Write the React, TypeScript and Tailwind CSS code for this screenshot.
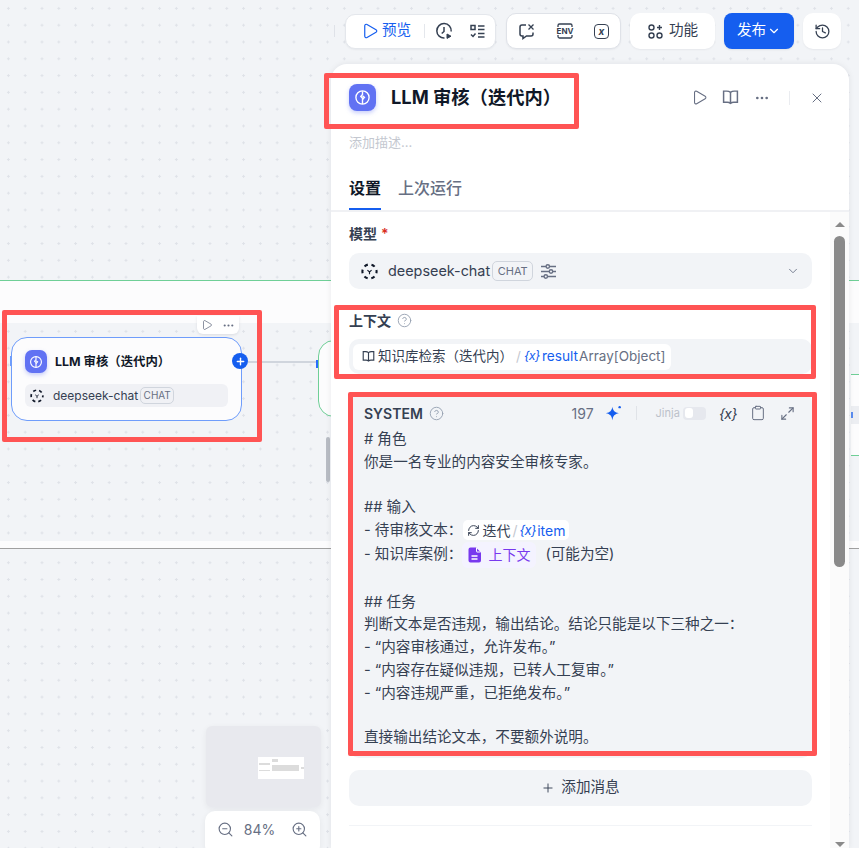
import {
  ChevronDown,
  CircleHelp,
  Clipboard,
  Ellipsis,
  History,
  Maximize2,
  Play,
  Plus,
  RefreshCw,
  X,
  ZoomIn,
  ZoomOut,
} from 'lucide-react';

const FONT = 'font-["Inter","Noto_Sans_CJK_SC",sans-serif]';

const VarIcon = ({ className = '' }: { className?: string }) => (
  <span className={`italic tracking-[-0.5px] ${className}`}>{'{x}'}</span>
);

// llm node logo
const BrainIcon = ({ size = 16 }: { size?: number }) => (
  <svg width={size} height={size} viewBox="0 0 16 16" fill="none" stroke="white" strokeWidth="1.3">
    <circle cx="8" cy="8" r="6.2" />
    <path d="M8 2v3.2L6.4 7 8 8.6V14" />
    <path d="M8 6.5l1.8 1.3L8 10" />
  </svg>
);

const LlmBadge = ({ box, icon }: { box: string; icon: number }) => (
  <div className={`${box} flex shrink-0 items-center justify-center bg-[#6172f3] shadow-[0_2px_4px_rgba(97,114,243,0.35)]`}>
    <BrainIcon size={icon} />
  </div>
);

const DeepseekIcon = ({ size = 18 }: { size?: number }) => (
  <svg width={size} height={size} viewBox="0 0 18 18" fill="none" stroke="#101828" strokeWidth="2.2">
    <circle cx="9" cy="9" r="7.500" strokeDasharray="3.900 3.950" strokeDashoffset="2" />
    <path d="M6.800 7.500L9 9.400l2.200-1.900M9 9.400v2.400" strokeWidth="1.200" />
  </svg>
);

const ChatTag = ({ className = '' }: { className?: string }) => (
  <span className={`flex items-center justify-center rounded-[5px] border border-[#d0d5dd] text-[#676f83] ${className}`}>
    CHAT
  </span>
);

const BookIcon = ({ size = 16, stroke = '#676f83' }: { size?: number; stroke?: string }) => (
  <svg width={size} height={size} viewBox="0 0 16 16" fill="none" stroke={stroke} strokeWidth="1.4">
    <path d="M8 3.200C7 2.400 5.800 2 4.500 2H1.500v10.500h3.500c1.200 0 2.200.3 3 1 .8-.7 1.800-1 3-1h3.500V2h-3c-1.300 0-2.500.4-3.500 1.200zM8 3.200v10.300" />
  </svg>
);

const ClockPlayIcon = () => (
  <svg width="18" height="18" viewBox="0 0 18 18" fill="none" stroke="#354052" strokeWidth="1.500">
    <path d="M9.500 16A7.200 7.200 0 1 1 16.200 9.500" />
    <path d="M9 5v4.500l-2.300 2" />
    <path d="M12 12l4 2.200-4 2.200z" fill="#354052" strokeLinejoin="round" strokeWidth="1" />
  </svg>
);

const ChecklistIcon = () => (
  <svg width="17" height="17" viewBox="0 0 17 17" fill="none" stroke="#354052" strokeWidth="1.500">
    <rect x="2" y="2.500" width="4" height="4" />
    <path d="M9 3h6.500M9 6.500h6.500M9 10.500h6.500M9 14h6.500" />
    <path d="M2 11.500l2 2 2.500-3" />
  </svg>
);

const ChatVarIcon = () => (
  <svg width="18" height="18" viewBox="0 0 18 18" fill="none" stroke="#354052" strokeWidth="1.500">
    <path d="M8 3H4a2 2 0 0 0-2 2v7a2 2 0 0 0 2 2h1v2.500L8.500 14H13a2 2 0 0 0 2-2v-1.500" />
    <path d="M10.500 2.500l5 5M15.500 2.500l-5 5" strokeWidth="1.300" />
  </svg>
);

const EnvIcon = () => (
  <div className="relative flex h-[18px] w-[18px] items-center justify-center">
    <svg className="absolute inset-0" width="18" height="18" viewBox="0 0 18 18" fill="none" stroke="#354052" strokeWidth="1.300">
      <path d="M2 5V3.500A1.500 1.500 0 0 1 3.500 2h11A1.500 1.500 0 0 1 16 3.500V5M2 13v1.500A1.500 1.500 0 0 0 3.500 16h11a1.500 1.500 0 0 0 1.500-1.500V13" />
    </svg>
    <span className="relative text-[8px] leading-none font-bold text-[#354052]">ENV</span>
  </div>
);

const SlidersIcon = () => (
  <svg width="17" height="17" viewBox="0 0 17 17" fill="none" stroke="#676f83" strokeWidth="1.400">
    <path d="M1 3.500h5M9.500 3.500H16M1 8.500h8M13 8.500h3M1 13.500h3M7.500 13.500H16" />
    <circle cx="7.800" cy="3.500" r="1.700" />
    <circle cx="11" cy="8.500" r="1.700" />
    <circle cx="5.800" cy="13.500" r="1.700" />
  </svg>
);

const SparkIcon = () => (
  <svg width="19" height="19" viewBox="0 0 17 17" fill="#155eef">
    <path d="M7.500 2.500c.6 3.600 2 5 5.800 5.800-3.800.8-5.200 2.200-5.800 6.200-.6-4-2-5.400-5.800-6.200 3.800-.8 5.200-2.200 5.800-5.800z" />
    <circle cx="14" cy="2.800" r="1.100" />
  </svg>
);

const DocIcon = () => (
  <svg width="14" height="16" viewBox="0 0 14 16">
    <path d="M2.500 0.500H8L13 5.500V13.500a2 2 0 0 1-2 2H2.500a2 2 0 0 1-2-2V2.500a2 2 0 0 1 2-2z" fill="#7839ee" />
    <path d="M8.500 1v3.500a.5.5 0 0 0 .5.5h3.500" stroke="white" strokeWidth="1" fill="none" />
    <path d="M3.500 9h6M3.500 12h6" stroke="white" strokeWidth="1.300" />
  </svg>
);

const Line = ({ children = null, className = 'h-[23px]' }: { children?: React.ReactNode; className?: string }) => (
  <div className={`flex items-center whitespace-pre ${className}`}>{children}</div>
);

const RedBox = ({ className }: { className: string }) => (
  <div className={`pointer-events-none absolute rounded-[2px] border-[5px] border-[#ff5454] ${className}`} />
);

const Canvas = () => (
  <>
    {/* iteration container */}
    <div className="absolute top-[280px] left-0 h-[269px] w-[859px] border-t border-b border-t-[#6fcf97] border-b-[#a0a0a0] bg-[#fcfcfd] pt-[42px] pb-[7px]">
      <div className="h-full w-full bg-[#f2f4f7] bg-[radial-gradient(#dfe2e8_1px,transparent_1px)] bg-[size:16.8px_16.8px]" />
    </div>

    {/* llm node */}
    <div className="absolute top-[337px] left-[11px] h-[84px] w-[231px] rounded-[16px] border border-[#6f9dfb] bg-[#fcfcfd] px-[13px] pt-[12px]">
      <div className="flex items-center gap-2">
        <LlmBadge box="h-[23px] w-[22px] rounded-[7px]" icon={14} />
        <span className="mt-[2px] text-[12.4px] font-bold text-[#101828]">LLM 审核（迭代内）</span>
      </div>
      <div className="mt-[11px] flex h-[23px] w-[203px] items-center rounded-[6px] bg-[#f0f1f5] pl-[5px]">
        <DeepseekIcon size={14} />
        <span className="ml-[9px] text-[12px] text-[#354052]">deepseek-chat</span>
        <ChatTag className="ml-[2px] h-[17px] w-[34px] text-[10px]" />
      </div>
    </div>
    <div className="absolute top-[316px] left-[197px] flex h-[18px] w-[42px] items-center justify-center gap-[9px] rounded-b-[6px] bg-white shadow-[0_1px_3px_rgba(16,24,40,0.1)]">
      <Play size={12} strokeWidth={1.5} className="text-[#676f83]" />
      <Ellipsis size={13} strokeWidth={2} className="text-[#676f83]" />
    </div>
    <div className="absolute top-[353px] left-[232px] flex h-4 w-4 items-center justify-center rounded-full bg-[#155eef]">
      <Plus size={11} strokeWidth={3} className="text-white" />
    </div>
    <div className="absolute top-[356px] left-[10px] h-[10px] w-[2px] bg-[#6f9dfb]" />
    <div className="absolute top-[361px] left-[248px] h-[2px] w-[69px] bg-[#d0d5dd]" />
    <div className="absolute top-[360px] left-[316px] h-[8px] w-[2px] bg-[#296dff]" />
    <div className="absolute top-[340px] left-[318px] h-[77px] w-[40px] rounded-[16px] border border-[#6fcf97] bg-[#fcfcfd]" />
    <div className="absolute top-[437px] left-[326px] h-[45px] w-[4px] rounded-[2px] bg-[#b8bcc4]" />

    {/* node cut off by the right edge */}
    <div className="absolute top-[374px] left-[851px] flex h-[82px] w-[8px] items-center border-t border-b border-[#6fcf97] bg-[#fcfcfd]">
      <div className="flex h-[18px] w-full items-center bg-[#eceef2]">
        <div className="h-[6px] w-[2px] bg-[#5b8def]" />
      </div>
    </div>

    {/* minimap */}
    <div className="absolute top-[726px] left-[206px] flex h-[81px] w-[115px] items-start rounded-[6px] bg-[#e8e9ee] pt-[31px] pl-[52px] shadow-[0_2px_6px_rgba(16,24,40,0.06)]">
      <div className="flex h-[22px] w-[46px] bg-white">
        <div className="mt-[6px] ml-[1px] flex h-[8px] w-[11px] flex-col justify-between">
          <div className="h-[1.5px] w-full bg-[#dcdcdc]" />
          <div className="h-[1.5px] w-full bg-[#dcdcdc]" />
        </div>
        <div className="ml-[2px] flex flex-col pt-[2px]">
          <div className="h-[3px] w-[6px] bg-[#dcdcdc]" />
          <div className="mt-[3px] h-[6px] w-[27px] bg-[#dcdcdc]" />
        </div>
        <div className="mt-[10px] ml-[2px] h-[1.5px] w-[3px] bg-[#dcdcdc]" />
      </div>
    </div>
    <div className="absolute top-[811px] left-[205px] flex h-[44px] w-[115px] items-center justify-between rounded-[10px] bg-white px-[12px] pb-[8px] text-[#676f83] shadow-[0_2px_6px_rgba(16,24,40,0.06)]">
      <ZoomOut size={17} strokeWidth={1.6} />
      <span className="mr-[6px] text-[14px]">84%</span>
      <ZoomIn size={17} strokeWidth={1.6} />
    </div>
  </>
);

const Toolbar = () => (
  <>
    <div className="absolute top-[25px] left-[334px] h-[12px] w-px bg-[#dfe2e8]" />
    <div className="absolute top-[13px] left-[345px] flex items-center text-[14.6px]">
      <div className="flex h-[35px] w-[151px] items-center rounded-[10px] border border-[#e4e7ec] bg-white pl-[15px] shadow-[0_1px_2px_rgba(16,24,40,0.05)]">
        <Play size={18} strokeWidth={1.6} className="text-[#155eef]" />
        <span className="ml-[3px] text-[#155eef]">预览</span>
        <div className="ml-[13px] h-[14px] w-px bg-[#e4e7ec]" />
        <div className="ml-[10px]">
          <ClockPlayIcon />
        </div>
        <div className="ml-[16px]">
          <ChecklistIcon />
        </div>
      </div>
      <div className="ml-[10px] flex h-[36px] w-[115px] items-center justify-between rounded-[10px] border border-[#dfe2e8] bg-white px-[11px] shadow-[0_1px_2px_rgba(16,24,40,0.05)]">
        <ChatVarIcon />
        <EnvIcon />
        <div className="flex h-[15px] w-[15px] items-center justify-center rounded-[4px] border-[1.5px] border-[#354052]">
          <span className="text-[10px] leading-none font-bold text-[#354052] italic">x</span>
        </div>
      </div>
      <div className="ml-[9px] flex h-[36px] w-[85px] items-center justify-center gap-[5px] rounded-[10px] bg-white text-[#354052] shadow-[0_1px_2px_rgba(16,24,40,0.05)]">
        <svg width="17" height="17" viewBox="0 0 17 17" fill="none" stroke="#354052" strokeWidth="1.400">
          <circle cx="4.500" cy="4.500" r="2.500" />
          <circle cx="4.500" cy="12.500" r="2.500" />
          <circle cx="12.500" cy="12.500" r="2.500" />
          <path d="M12.500 2v5M10 4.500h5" />
        </svg>
        <span>功能</span>
      </div>
      <div className="ml-[9px] flex h-[36px] w-[70px] items-center justify-center gap-[1px] rounded-[8px] bg-[#155eef] text-white shadow-[0_1px_2px_rgba(16,24,40,0.08)]">
        <span>发布</span>
        <ChevronDown size={14} strokeWidth={2} />
      </div>
      <div className="ml-[9px] flex h-[36px] w-[38px] items-center justify-center rounded-[10px] bg-white shadow-[0_1px_2px_rgba(16,24,40,0.05)]">
        <History size={17} strokeWidth={1.8} className="text-[#354052]" />
      </div>
    </div>
  </>
);

const Panel = () => (
  <div className="absolute top-[64px] left-[331px] flex h-[784px] w-[518px] flex-col overflow-hidden rounded-t-[16px] bg-white shadow-[0_0_6px_rgba(16,24,40,0.08)]">
    <div className="flex h-[67px] shrink-0 items-center pr-[24px] pl-[18px]">
      <LlmBadge box="h-[27px] w-[27px] rounded-[8px]" icon={17} />
      <span className="ml-[15px] text-[18.300px] font-bold text-[#101828]">LLM 审核（迭代内）</span>
      <div className="ml-auto flex items-center text-[#676f83]">
        <Play size={17} strokeWidth={1.5} />
        <div className="ml-[14px]">
          <BookIcon size={17} />
        </div>
        <Ellipsis size={16} strokeWidth={2} className="ml-[15px]" />
        <div className="mx-[19px] h-[14px] w-px bg-[#eaecf0]" />
        <X size={16} strokeWidth={1.5} />
      </div>
    </div>
    <div className="mt-[2px] pl-[18px] text-[13px] leading-[18px] text-[#c4c8d0]">添加描述...</div>
    <div className="mt-[19px] flex shrink-0 gap-[17px] border-b-2 border-[#f0f1f4] pl-[18px] text-[16px]">
      <div className="h-[40px] border-b-2 border-[#155eef] pt-[6px] leading-[24px] font-semibold text-[#101828]">设置</div>
      <div className="pt-[6px] leading-[24px] font-medium text-[#676f83]">上次运行</div>
    </div>

    <div className="flex min-h-0 flex-1">
      <div className="w-[499px] shrink-0 pr-[18px] pl-[18px]">
        <div className="mt-[11px] flex h-[20px] items-center text-[14px] font-semibold text-[#354052]">
          模型<span className="ml-[4px] text-[#d92d20]">*</span>
        </div>
        <div className="mt-[10px] flex h-[36px] w-[463px] items-center rounded-[10px] bg-[#f2f4f7] pr-[12px] pl-[12px]">
          <DeepseekIcon size={17} />
          <span className="ml-[10px] text-[14.400px] text-[#354052]">deepseek-chat</span>
          <ChatTag className="ml-[2px] h-[20px] w-[41px] text-[11px]" />
          <div className="ml-[7px]">
            <SlidersIcon />
          </div>
          <ChevronDown size={14} strokeWidth={1.5} className="ml-auto text-[#676f83]" />
        </div>

        <div className="mt-[21px] flex h-[20px] items-center gap-[6px] text-[14px] font-semibold text-[#354052]">
          上下文
          <CircleHelp size={15} strokeWidth={1.5} className="text-[#98a2b2]" />
        </div>
        <div className="mt-[9px] flex h-[35px] w-[463px] items-center rounded-[10px] bg-[#f2f4f7] pl-[4px]">
          <div className="flex h-[26px] items-center rounded-[6px] bg-white pr-[6px] pl-[9px] text-[13.500px] text-[#354052]">
            <BookIcon size={13} stroke="#354052" />
            <span className="ml-[3px] whitespace-nowrap">知识库检索（迭代内）</span>
            <span className="ml-[3px] text-[#c4c8d0]">/</span>
            <VarIcon className="ml-[3px] text-[12.500px] text-[#155eef]" />
            <span className="ml-[2px] text-[13.700px] text-[#155eef]">result</span>
            <span className="ml-[1px] text-[13.500px] text-[#676f83]">Array[Object]</span>
          </div>
        </div>

        <div className="mt-[18px] w-[463px] rounded-[10px] bg-[#f2f4f7] px-[15px] pt-[9px] pb-[9px]">
          <div className="flex h-[24px] items-center pr-[2px]">
            <span className="text-[14px] font-semibold text-[#354052]">SYSTEM</span>
            <CircleHelp size={15} strokeWidth={1.5} className="ml-[6px] text-[#98a2b2]" />
            <span className="ml-auto text-[14px] text-[#676f83]">197</span>
            <div className="ml-[10px]">
              <SparkIcon />
            </div>
            <div className="mr-[19px] ml-[13px] h-[14px] w-px bg-[#e0e3e8]" />
            <span className="text-[11px] text-[#bcc1ca]">Jinja</span>
            <div className="ml-[3px] flex h-[13px] w-[23px] items-center rounded-[4px] bg-[#e6e8ee] pl-[2px]">
              <div className="h-[10px] w-[8px] rounded-[3px] bg-white" />
            </div>
            <VarIcon className="ml-[13px] text-[14px] text-[#354052]" />
            <Clipboard size={16} strokeWidth={1.5} className="ml-[13px] text-[#676f83]" />
            <Maximize2 size={15} strokeWidth={1.8} className="ml-[14px] text-[#676f83]" />
          </div>
          <div className="mt-[3px] text-[14.600px] leading-[23px] text-[#354052]">
            <Line># 角色</Line>
            <Line>你是一名专业的内容安全审核专家。</Line>
            <Line className="h-[22px]" />
            <Line>## 输入</Line>
            <Line className="h-[22px]">
              - 待审核文本：
              <span className="ml-[1px] flex h-[20px] items-center gap-[1px] rounded-[5px] bg-white px-[4px] text-[14px]">
                <RefreshCw size={13} strokeWidth={1.8} className="mr-[1px] text-[#354052]" />
                迭代
                <span className="mx-[1px] text-[#c4c8d0]">/</span>
                <VarIcon className="text-[13px] text-[#155eef]" />
                <span className="text-[#155eef]">item</span>
              </span>
            </Line>
            <Line className="h-[27px]">
              - 知识库案例：
              <span className="flex h-[26px] items-center gap-[6px] rounded-[6px] bg-[#f4f3ff] px-[6px] text-[14px] text-[#7839ee]">
                <DocIcon />
                上下文
              </span>
              <span className="ml-[9px]">(可能为空)</span>
            </Line>
            <Line />
            <Line className="h-[22px]">## 任务</Line>
            <Line>判断文本是否违规，输出结论。结论只能是以下三种之一：</Line>
            <Line>- “内容审核通过，允许发布。”</Line>
            <Line>- “内容存在疑似违规，已转人工复审。”</Line>
            <Line>- “内容违规严重，已拒绝发布。”</Line>
            <Line className="h-[21px]" />
            <Line>直接输出结论文本，不要额外说明。</Line>
          </div>
        </div>

        <div className="mt-[12px] flex h-[36px] w-[463px] items-center justify-center gap-[6px] rounded-[10px] bg-[#f2f4f7] text-[14.600px] text-[#354052]">
          <Plus size={14} strokeWidth={1.6} />
          添加消息
        </div>
        <div className="mt-[19px] h-px w-[463px] bg-[#f2f4f7]" />
      </div>

      {/* scrollbar */}
      <div className="flex w-[19px] shrink-0 flex-col items-center bg-[#fbfbfb]">
        <div className="mt-[10px] h-0 w-0 border-x-[5px] border-b-[5px] border-x-transparent border-b-[#8a8a8a]" />
        <div className="mt-[9px] h-[331px] w-[11px] rounded-full bg-[#8a8a8a]" />
        <div className="mt-auto mb-[1px] h-0 w-0 border-x-[5px] border-t-[5px] border-x-transparent border-t-[#8a8a8a]" />
      </div>
    </div>
  </div>
);

export default function App() {
  return (
    <div className={`relative h-[848px] w-[859px] overflow-hidden bg-[#f2f4f7] bg-[radial-gradient(#dfe2e8_1px,transparent_1px)] bg-[size:16.8px_16.8px] ${FONT}`}>
      <Canvas />
      <Toolbar />
      <Panel />
      <RedBox className="top-[73px] left-[324px] h-[56px] w-[255px]" />
      <RedBox className="top-[305px] left-[334px] h-[74px] w-[482px]" />
      <RedBox className="top-[392px] left-[348px] h-[364px] w-[469px]" />
      <RedBox className="top-[310px] left-[2px] h-[132px] w-[260px]" />
    </div>
  );
}
